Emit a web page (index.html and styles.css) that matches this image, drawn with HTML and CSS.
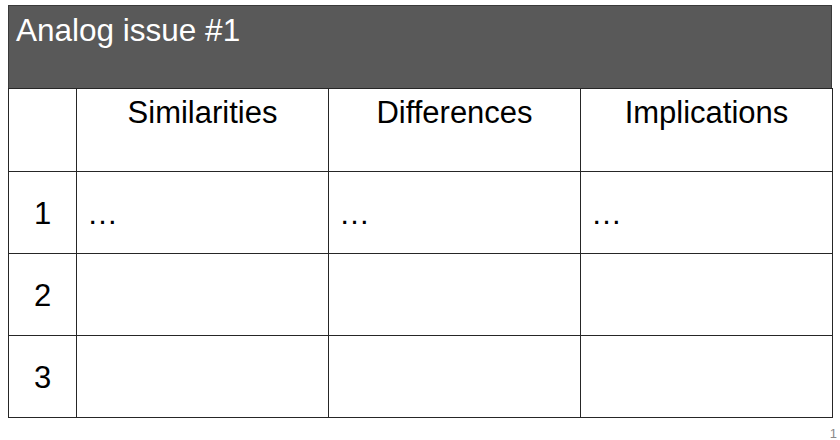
FILE: index.html
```html
<!DOCTYPE html>
<html>
<head>
<meta charset="utf-8">
<link rel="stylesheet" href="styles.css">
</head>
<body>
<div class="slide">
  <div class="title-bar">Analog issue #1</div>
  <table class="grid">
    <colgroup>
      <col class="c-num">
      <col class="c-wide">
      <col class="c-wide">
      <col class="c-wide">
    </colgroup>
    <tr class="head">
      <td></td>
      <td>Similarities</td>
      <td>Differences</td>
      <td>Implications</td>
    </tr>
    <tr class="row">
      <td class="num">1</td>
      <td>…</td>
      <td>…</td>
      <td>…</td>
    </tr>
    <tr class="row">
      <td class="num">2</td>
      <td></td>
      <td></td>
      <td></td>
    </tr>
    <tr class="row">
      <td class="num">3</td>
      <td></td>
      <td></td>
      <td></td>
    </tr>
  </table>
  <div class="page-num">1</div>
</div>
</body>
</html>
```

FILE: styles.css
```css
html, body {
  margin: 0;
  padding: 0;
  background: #ffffff;
}

.slide {
  width: 840px;
  height: 440px;
  padding: 5px 8px 0 8px;
  box-sizing: border-box;
  font-family: "Liberation Sans", Arial, sans-serif;
  color: #000;
}

.title-bar {
  box-sizing: border-box;
  height: 84px;
  background: #595959;
  border: 1px solid #3a3a3a;
  color: #ffffff;
  font-size: 31.5px;
  line-height: 36px;
  padding: 6px 0 0 7px;
}

.grid {
  border-collapse: collapse;
  table-layout: fixed;
  width: 825px;
  margin-top: -1px;
}

.c-num { width: 68px; }
.c-wide { width: 252px; }

.grid td {
  border: 1px solid #262626;
  font-size: 31px;
  line-height: 36px;
  padding: 0;
}

.head td {
  height: 83px;
  vertical-align: top;
  text-align: center;
  padding-top: 6px;
  box-sizing: border-box;
}

.row td {
  height: 82px;
  vertical-align: middle;
  padding-left: 10px;
  padding-top: 2px;
  box-sizing: border-box;
}

.row td.num {
  text-align: center;
  padding-left: 0;
}

.page-num {
  text-align: right;
  font-size: 13px;
  line-height: 15px;
  color: #8a8a8a;
  margin-top: 8px;
  margin-right: -5px;
}
```
